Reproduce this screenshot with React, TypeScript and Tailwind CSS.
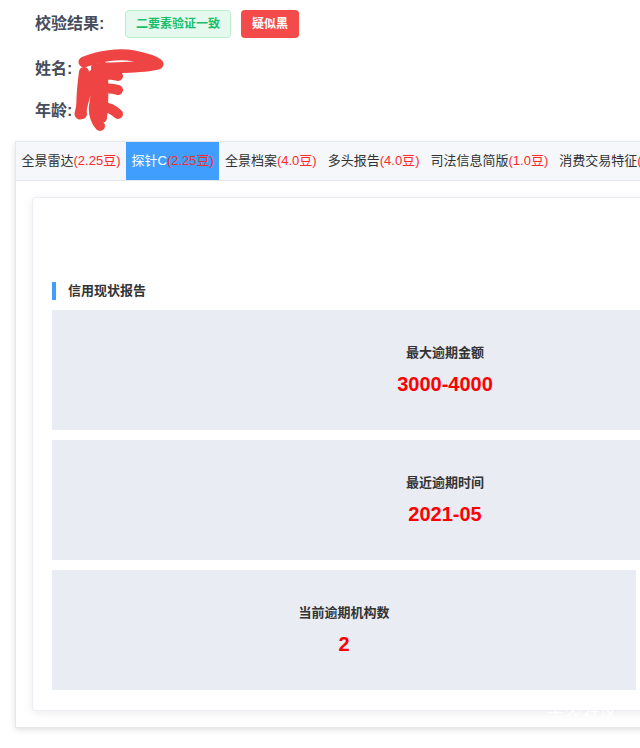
import React from "react";

const font = { fontFamily: '"Liberation Sans", "Noto Sans CJK SC", sans-serif' };

const tabs = [
  { name: "全景雷达", price: "2.25豆" },
  { name: "探针C", price: "2.25豆", active: true },
  { name: "全景档案", price: "4.0豆" },
  { name: "多头报告", price: "4.0豆" },
  { name: "司法信息简版", price: "1.0豆" },
  { name: "消费交易特征", price: "1.0豆" },
];

function Stat({ label, value, width }: { label: string; value: string; width: string }) {
  return (
    <div className={`${width} h-[120px] bg-[#e9ecf3] flex flex-col items-center pt-[33px]`}>
      <div className="text-[13px] leading-[20px] font-semibold text-[#333]">{label}</div>
      <div className="mt-[8px] text-[20px] leading-[26px] font-bold text-[#ff0000]">{value}</div>
    </div>
  );
}

export default function App() {
  return (
    <div className="relative w-[640px] h-[748px] overflow-hidden bg-white" style={font}>
      <div className="pl-[35px] pt-[10px]">
        <div className="flex items-center h-[28px]">
          <span className="text-[16px] font-semibold text-[#464c5b] w-[80px]">校验结果:</span>
          <span className="ml-[10px] h-[28px] w-[106px] flex items-center justify-center rounded-[4px] border border-[#bdeccd] bg-[#e6f9ee] text-[12px] font-bold text-[#19be6b]">
            二要素验证一致
          </span>
          <span className="ml-[10px] h-[28px] w-[58px] flex items-center justify-center rounded-[4px] bg-[#f54a4a] text-[12px] font-bold text-white">
            疑似黑
          </span>
        </div>
        <div className="mt-[17px] h-[28px] flex items-center text-[16px] font-semibold text-[#464c5b]">姓名:</div>
        <div className="mt-[14px] h-[28px] flex items-center text-[16px] font-semibold text-[#464c5b]">年龄:</div>
      </div>

      <svg className="absolute left-[74px] top-[48px]" width="92" height="84" viewBox="0 0 92 84" fill="none">
        <path
          d="M10 14 C25 8 45 5 60 8 C70 10 78 12 84 16 C70 20 50 19 34 20 C24 22 18 26 14 34 C12 44 8 56 6 66"
          stroke="#ef4444"
          strokeWidth="11"
          strokeLinecap="round"
          strokeLinejoin="round"
        />
        <path
          d="M22 20 C24 32 22 46 20 58 C19 66 22 74 26 78 M14 30 C24 26 36 26 44 28 M18 44 C28 40 38 40 44 42 M22 60 C30 58 38 60 44 66 M10 24 C8 40 6 54 8 66 M28 18 C30 34 30 50 28 70"
          stroke="#ef4444"
          strokeWidth="10"
          strokeLinecap="round"
          strokeLinejoin="round"
        />
      </svg>

      <div className="mt-[16px] ml-[15px] w-[850px] border border-[#e5e7eb] shadow-[0_2px_6px_rgba(0,0,0,0.12)] bg-white">
        <div className="flex h-[39px] bg-[#f5f7fa] border-b border-[#e4e7ed]">
          {tabs.map((t) => (
            <div
              key={t.name}
              className={`flex items-center px-[5.5px] text-[13px] whitespace-nowrap ${t.active ? "bg-[#409eff] text-white" : "text-[#303133]"}`}
            >
              {t.name}
              <span className="text-[#ff2a2a]">({t.price})</span>
            </div>
          ))}
        </div>
        <div className="p-[16px]">
          <div className="rounded-[4px] border border-[#ebeef5] shadow-[0_2px_10px_rgba(0,0,0,0.08)] bg-white px-[19px] pt-[83px] pb-[20px]">
            <div className="flex items-center h-[20px]">
              <div className="w-[4px] h-[18px] bg-[#409eff]" />
              <div className="ml-[12px] text-[13px] font-semibold text-[#333]">信用现状报告</div>
            </div>
            <div className="mt-[9px] flex flex-col gap-[10px]">
              <Stat label="最大逾期金额" value="3000-4000" width="w-[786px]" />
              <Stat label="最近逾期时间" value="2021-05" width="w-[786px]" />
              <Stat label="当前逾期机构数" value="2" width="w-[584px]" />
            </div>
          </div>
        </div>
      </div>

      <div className="absolute left-[547px] top-[702px] text-[17px] text-white opacity-90 tracking-[1px]">卡农社区</div>
    </div>
  );
}
